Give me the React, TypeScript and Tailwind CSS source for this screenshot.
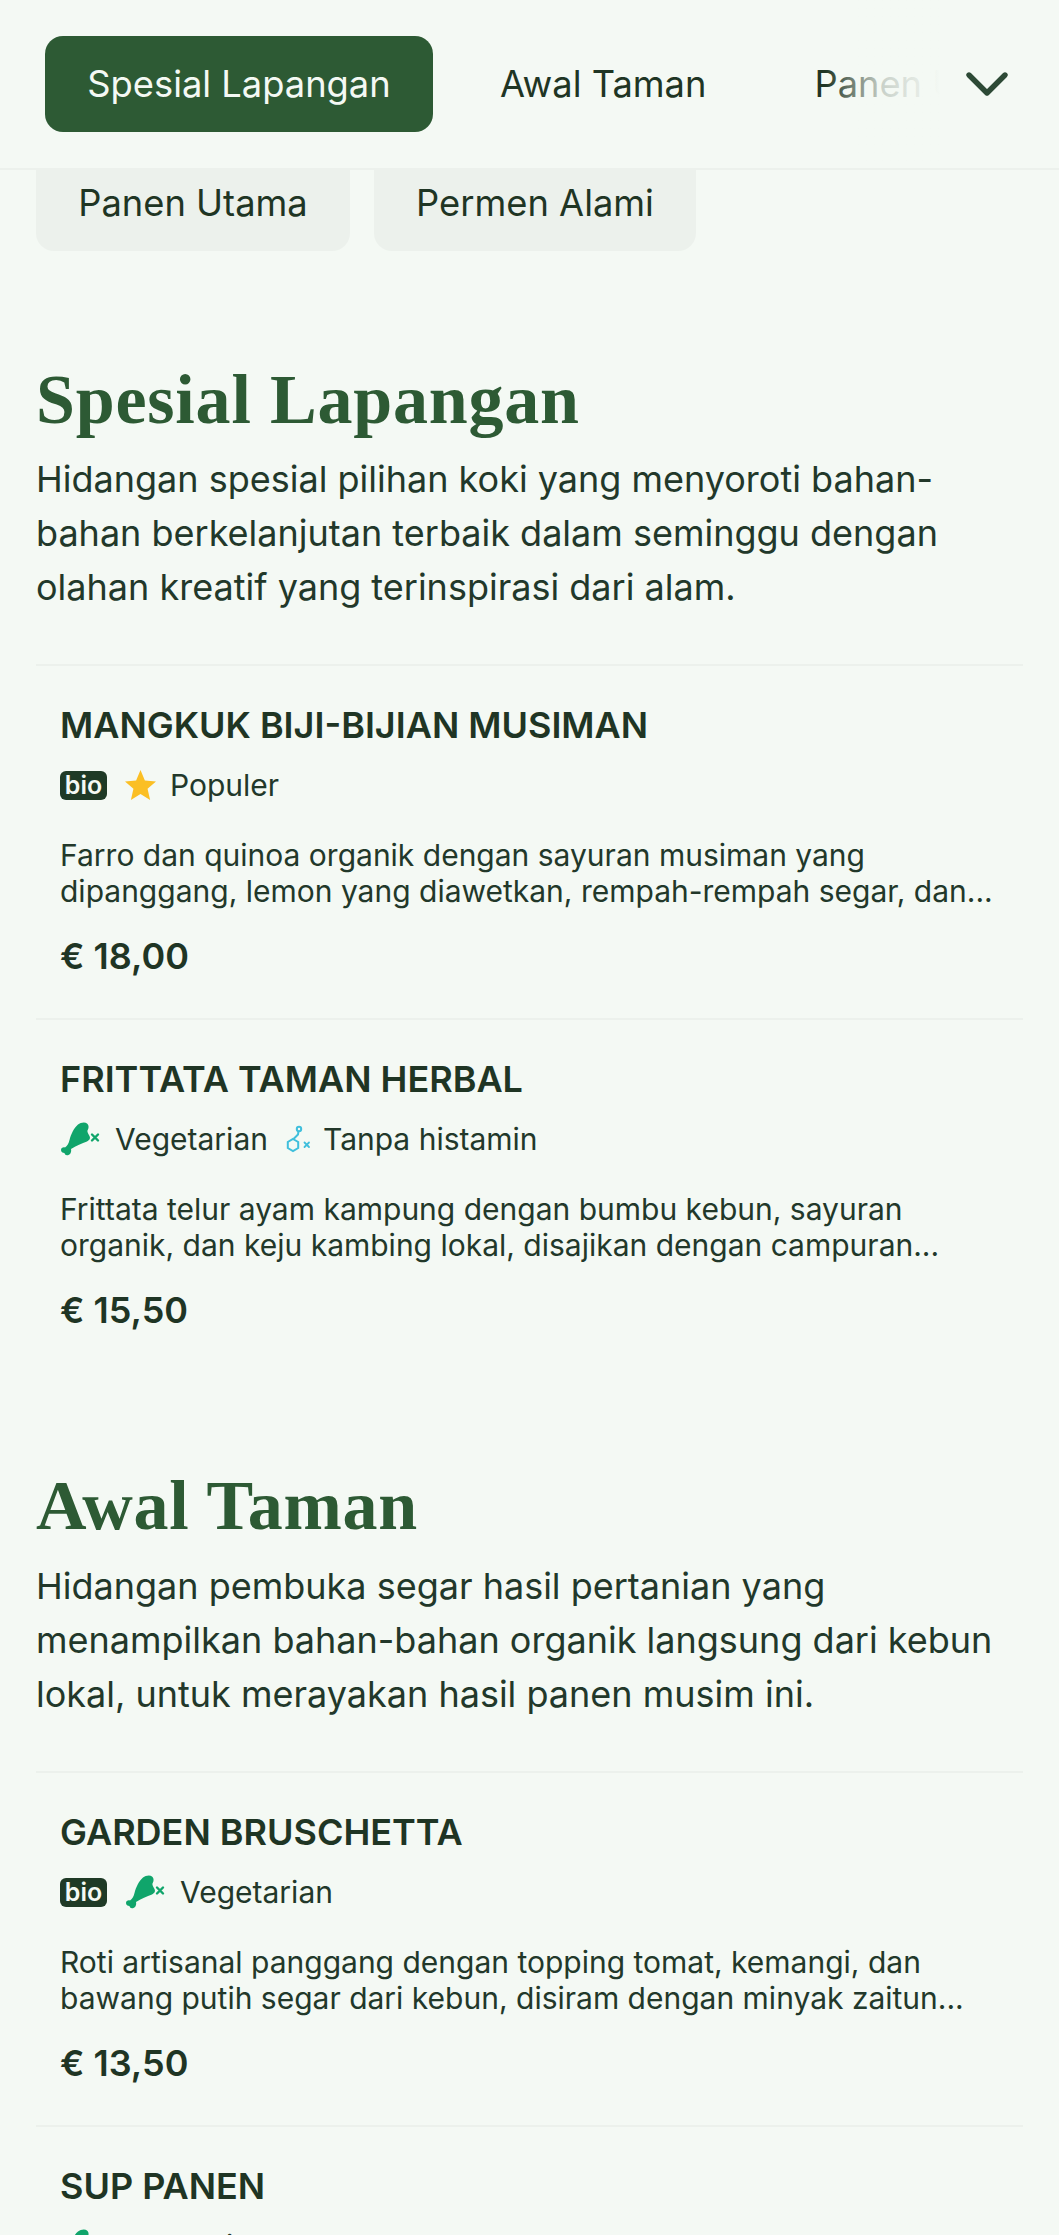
import { ChevronDown } from 'lucide-react';

type Tag = 'bio' | 'popular' | 'vegetarian' | 'histamine';

interface Dish {
  name: string;
  tags: Tag[];
  lines?: string[];
  price?: string;
}

const sections: { title: string; intro: string[]; dishes: Dish[] }[] = [
  {
    title: 'Spesial Lapangan',
    intro: [
      'Hidangan spesial pilihan koki yang menyoroti bahan-',
      'bahan berkelanjutan terbaik dalam seminggu dengan',
      'olahan kreatif yang terinspirasi dari alam.',
    ],
    dishes: [
      {
        name: 'MANGKUK BIJI-BIJIAN MUSIMAN',
        tags: ['bio', 'popular'],
        lines: [
          'Farro dan quinoa organik dengan sayuran musiman yang',
          'dipanggang, lemon yang diawetkan, rempah-rempah segar, dan...',
        ],
        price: '€ 18,00',
      },
      {
        name: 'FRITTATA TAMAN HERBAL',
        tags: ['vegetarian', 'histamine'],
        lines: [
          'Frittata telur ayam kampung dengan bumbu kebun, sayuran',
          'organik, dan keju kambing lokal, disajikan dengan campuran...',
        ],
        price: '€ 15,50',
      },
    ],
  },
  {
    title: 'Awal Taman',
    intro: [
      'Hidangan pembuka segar hasil pertanian yang',
      'menampilkan bahan-bahan organik langsung dari kebun',
      'lokal, untuk merayakan hasil panen musim ini.',
    ],
    dishes: [
      {
        name: 'GARDEN BRUSCHETTA',
        tags: ['bio', 'vegetarian'],
        lines: [
          'Roti artisanal panggang dengan topping tomat, kemangi, dan',
          'bawang putih segar dari kebun, disiram dengan minyak zaitun...',
        ],
        price: '€ 13,50',
      },
      { name: 'SUP PANEN', tags: ['vegetarian'] },
    ],
  },
];

function Drumstick() {
  return (
    <svg width="41" height="34" viewBox="0 0 41 34" className="shrink-0">
      <path
        d="M1 28C1 26 3 25 5 25.500C7 24 8.500 22 9.500 18C11 12 14 6 18 2.500C20.500.5 25-.2 27 1.500C29 3 29 6 27.500 8.500C27 10 28.500 12 29.500 14C30.500 16 30 18 27 19.500C22 21.500 16 23.500 11 27C11.500 29 11 32 8.500 33C6 33.800 4.500 32.500 4.500 31C2.500 31 1 30 1 28Z"
        fill="#10a56b"
      />
      <path d="M32 12.500l6 6M38 12.500l-6 6" stroke="#10a56b" strokeWidth="2.400" strokeLinecap="round" />
    </svg>
  );
}

function Histamine() {
  return (
    <svg width="26" height="28" viewBox="0 0 26 28" fill="none" className="shrink-0" stroke="#3fbfdc" strokeWidth="2">
      <circle cx="14" cy="4" r="2.200" />
      <path d="M13.500 6.200l-.5 3.300-4.500 4.500" />
      <path d="M8 14l5.200 3v6l-5.200 3-5.200-3v-6z" />
      <path d="M19.500 17.500l4.500 4.500M24 17.500l-4.500 4.500" strokeWidth="1.800" strokeLinecap="round" />
    </svg>
  );
}

function Star() {
  return (
    <svg width="31" height="30" viewBox="1 1 29 28" className="shrink-0">
      <path d="M15.500 1l4.100 9.800 10.400.9-7.900 6.900 2.400 10.400-9-5.500-9 5.500 2.400-10.400L1 11.700l10.400-.9z" fill="#fbbf24" />
    </svg>
  );
}

function TagRow({ tags }: { tags: Tag[] }) {
  return (
    <div className="flex h-9 items-center text-[30px] leading-9 text-[#22382a]">
      {tags.map((tag) => {
        if (tag === 'bio') {
          return (
            <span
              key={tag}
              className="mr-[18px] flex h-[29px] w-[47px] items-center justify-center rounded-[6px] bg-[#1f3a26] text-[25px] font-semibold leading-none text-[#f4f9f4]"
            >
              bio
            </span>
          );
        }
        if (tag === 'popular') {
          return (
            <span key={tag} className="flex items-center gap-[14px]">
              <Star />
              Populer
            </span>
          );
        }
        if (tag === 'vegetarian') {
          return (
            <span key={tag} className="mr-[17px] flex items-center gap-[14px]">
              <Drumstick />
              Vegetarian
            </span>
          );
        }
        return (
          <span key={tag} className="flex items-center gap-[12px]">
            <Histamine />
            Tanpa histamin
          </span>
        );
      })}
    </div>
  );
}

export default function App() {
  return (
    <div className="h-[2235px] w-[1059px] overflow-hidden bg-[#f4f9f4] font-['Inter',sans-serif] text-[#1f3524]">
      <header className="flex h-[170px] items-center border-b-2 border-[#ecf1ec] pl-[45px]">
        <div className="relative flex h-full w-[895px] items-center overflow-hidden">
          <span className="flex h-[96px] w-[388px] shrink-0 items-center justify-center rounded-[18px] bg-[#2d5a34] text-[36.300px] text-[#f4f9f4]">
            Spesial Lapangan
          </span>
          <span className="ml-[67px] shrink-0 text-[36.300px] text-[#1f3524]">Awal Taman</span>
          <span className="ml-[108px] shrink-0 text-[36.300px] text-[#1f3524]">Panen Utama</span>
          <div className="absolute inset-y-0 right-0 w-[115px] bg-gradient-to-r from-transparent via-[#f4f9f4]/80 to-[#f4f9f4]" />
        </div>
        <ChevronDown size={72} strokeWidth={1.8} className="ml-[11px] shrink-0 text-[#2d4a36]" />
      </header>

      {/* Category chips below the nav */}
      <div className="mb-[109px] flex gap-[24px] pl-[36px]">
        <span className="flex h-[81px] w-[314px] items-center justify-center rounded-b-[18px] bg-[#ecf1ec] pb-[14px] text-[36.300px]">
          Panen Utama
        </span>
        <span className="flex h-[81px] w-[322px] items-center justify-center rounded-b-[18px] bg-[#ecf1ec] pb-[14px] text-[36.300px]">
          Permen Alami
        </span>
      </div>

      {sections.map((section, index) => (
        <section key={section.title} className="mx-[36px] mb-[94px]">
          <h2 className="font-['Liberation_Serif',serif] text-[70px] font-bold leading-[80px] tracking-[0.8px] text-[#2d5a34]">
            {section.title}
          </h2>
          <div className={`${index === 0 ? 'mt-[12px]' : 'mt-[13px]'} text-[36px] leading-[54px] text-[#22382a]`}>
            {section.intro.map((line) => (
              <p key={line}>{line}</p>
            ))}
          </div>
          <div className="mt-[50px]">
            {section.dishes.map((dish) => (
              <article key={dish.name} className="h-[354px] border-t-2 border-[#ecf1ec] px-[24px] pt-[34px]">
                <h3 className="text-[36px] font-semibold leading-[50px] text-[#1f3524]">{dish.name}</h3>
                <div className="mt-[17px]">
                  <TagRow tags={dish.tags} />
                </div>
                {dish.lines && (
                  <div className="mt-[34px] text-[30px] leading-[36px] text-[#22382a]">
                    {dish.lines.map((line) => (
                      <p key={line} className="whitespace-nowrap">
                        {line}
                      </p>
                    ))}
                  </div>
                )}
                {dish.price && <p className="mt-[22px] text-[36px] font-semibold leading-[50px]">{dish.price}</p>}
              </article>
            ))}
          </div>
        </section>
      ))}
    </div>
  );
}
